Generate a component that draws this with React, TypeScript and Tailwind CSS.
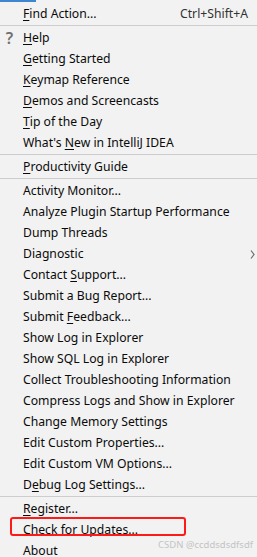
import React from "react";

type Item = { pre?: string; u?: string; post: string; shortcut?: string; sub?: boolean; icon?: boolean };

const groups: Item[][] = [
  [{ pre: "", u: "F", post: "ind Action...", shortcut: "Ctrl+Shift+A" }],
  [
    { pre: "", u: "H", post: "elp", icon: true },
    { pre: "", u: "G", post: "etting Started" },
    { pre: "", u: "K", post: "eymap Reference" },
    { pre: "", u: "D", post: "emos and Screencasts" },
    { pre: "", u: "T", post: "ip of the Day" },
    { pre: "What's ", u: "N", post: "ew in IntelliJ IDEA" },
  ],
  [{ pre: "", u: "P", post: "roductivity Guide" }],
  [
    { post: "Activity Monitor..." },
    { post: "Analyze Plugin Startup Performance" },
    { post: "Dump Threads" },
    { post: "Diagnostic", sub: true },
    { pre: "Contact ", u: "S", post: "upport..." },
    { post: "Submit a Bug Report..." },
    { pre: "Submit ", u: "F", post: "eedback..." },
    { post: "Show Log in Explorer" },
    { post: "Show SQL Log in Explorer" },
    { post: "Collect Troubleshooting Information" },
    { post: "Compress Logs and Show in Explorer" },
    { post: "Change Memory Settings" },
    { post: "Edit Custom Properties..." },
    { post: "Edit Custom VM Options..." },
    { pre: "D", u: "e", post: "bug Log Settings..." },
  ],
  [
    { pre: "", u: "R", post: "egister..." },
    { post: "Check for Updates..." },
    { pre: "", u: "A", post: "bout" },
  ],
];

function Row({ it }: { it: Item }) {
  return (
    <div className="flex h-[21px] items-center pt-px">
      <span className="flex w-[23px] shrink-0 justify-center pr-[4px] text-[16px] font-semibold text-[#707070]">
        {it.icon ? "?" : ""}
      </span>
      <span className="flex-1 whitespace-nowrap">
        {it.pre}
        {it.u && <span className="underline decoration-1 underline-offset-[2px]">{it.u}</span>}
        {it.post}
      </span>
      {it.shortcut && <span className="whitespace-nowrap pr-[9px] text-[#333]">{it.shortcut}</span>}
      {it.sub && (
        <svg className="mr-[2px]" width="5" height="9" viewBox="0 0 5 9">
          <path d="M1 0.5 L4 4.5 L1 8.5" stroke="#6b6b6b" strokeWidth="1.2" fill="none" />
        </svg>
      )}
    </div>
  );
}

export default function App() {
  return (
    <div
      className="relative h-[557px] w-[257px] overflow-hidden bg-[#f2f2f2] text-[12.2px] text-[#0a0a0a]"
      style={{ fontFamily: '"Noto Sans", "Liberation Sans", sans-serif' }}
    >
      <div className="flex h-[3px] items-start">
        <div className="h-[2px] w-[36px] bg-[#3f86d0]" />
      </div>
      {groups.map((g, gi) => (
        <div key={gi}>
          {gi > 0 && (
            <div className="py-px">
              <div className="h-px bg-[#cdcdcd]" />
            </div>
          )}
          {g.map((it, i) => (
            <Row key={i} it={it} />
          ))}
        </div>
      ))}
      <div className="pointer-events-none absolute left-[10px] top-[517px] h-[19px] w-[176px] rounded-[3px] border-2 border-[#ff1a1a]" />
      <div className="pointer-events-none absolute right-[4px] top-[538px] text-[9.5px] text-[#c4c4c4]">
        CSDN @ccddsdsdfsdf
      </div>
    </div>
  );
}
